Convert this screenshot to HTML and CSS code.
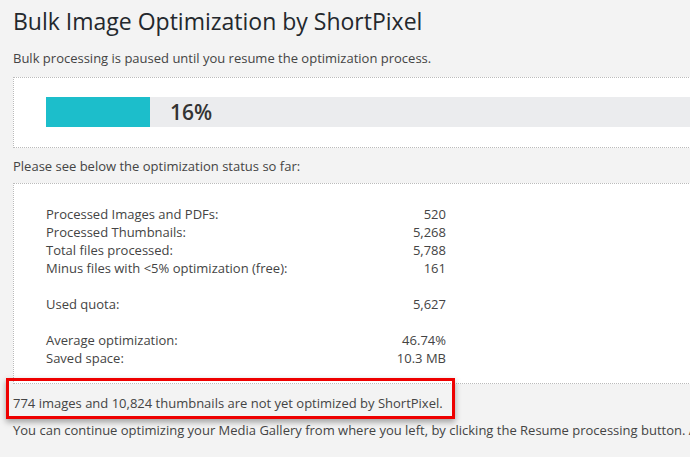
FILE: index.html
```html
<!DOCTYPE html>
<html>
<head>
<meta charset="utf-8">
<link rel="stylesheet" href="styles.css">
</head>
<body>
<div class="wrap">
  <h1 class="title">Bulk Image Optimization by ShortPixel</h1>
  <p class="intro">Bulk processing is paused until you resume the optimization process.</p>
  <div class="box progress-box">
    <div class="bar">
      <div class="fill" style="width:104px"></div>
      <span class="pct">16%</span>
    </div>
  </div>
  <p class="status">Please see below the optimization status so far:</p>
  <div class="box stats-box">
    <div class="stats">
      <div class="row"><span>Processed Images and PDFs:</span><span>520</span></div>
      <div class="row"><span>Processed Thumbnails:</span><span>5,268</span></div>
      <div class="row"><span>Total files processed:</span><span>5,788</span></div>
      <div class="row"><span>Minus files with &lt;5% optimization (free):</span><span>161</span></div>
      <div class="row gap"><span>Used quota:</span><span>5,627</span></div>
      <div class="row gap"><span>Average optimization:</span><span>46.74%</span></div>
      <div class="row"><span>Saved space:</span><span>10.3 MB</span></div>
    </div>
  </div>
  <p class="notyet"><span class="mark"></span>774 images and 10,824 thumbnails are not yet optimized by ShortPixel.</p>
  <p class="resume">You can continue optimizing your Media Gallery from where you left, by clicking the Resume processing button. Already optimized images will not be reprocessed.</p>
</div>
</body>
</html>
```

FILE: styles.css
```css
html, body {
  margin: 0;
  padding: 0;
  background: #f3f3f3;
  overflow: hidden;
}
.wrap {
  width: 900px;
  padding-left: 13px;
  font-family: "Open Sans", "Liberation Sans", sans-serif;
  font-size: 13px;
  color: #444;
}
.title {
  margin: 0;
  padding-top: 7px;
  font-size: 23px;
  font-weight: 400;
  line-height: 29px;
  color: #23282d;
}
.intro {
  margin: 13px 0 0 0;
  line-height: 18px;
}
.box {
  background: #fff;
  border: 1px dotted #bbb;
  border-right: none;
}
.progress-box {
  margin-top: 10px;
  padding: 19px 0 20px 32px;
}
.bar {
  position: relative;
  height: 30px;
  background: #ebecee;
  display: flex;
  align-items: center;
}
.fill {
  height: 30px;
  background: #1cbecb;
}
.pct {
  margin-left: 20px;
  font-size: 21px;
  font-weight: 600;
  color: #333;
}
.status {
  margin: 9px 0 0 0;
  line-height: 18px;
}
.stats-box {
  margin-top: 8px;
  padding: 21px 0 16px 32px;
}
.stats {
  width: 400px;
}
.row {
  display: flex;
  justify-content: space-between;
  line-height: 18px;
}
.row.gap {
  margin-top: 18px;
}
.notyet {
  position: relative;
  margin: 10px 0 0 0;
  line-height: 18px;
}
.mark {
  position: absolute;
  left: -7px;
  top: -16px;
  width: 443px;
  height: 35px;
  border: 3px solid #ee0000;
  box-shadow: 0 3px 6px rgba(0, 0, 0, 0.35);
}
.resume {
  margin: 9px 0 0 0;
  line-height: 18px;
  white-space: nowrap;
}
```
